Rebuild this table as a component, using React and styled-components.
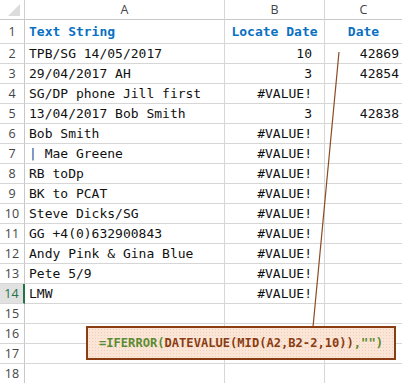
import styled, { createGlobalStyle } from "styled-components"

const GlobalStyle = createGlobalStyle`
    html, body {
        margin: 0;
        padding: 0;
        background: #ffffff;
        overflow: hidden;
    }
    * {
        box-sizing: border-box;
    }
`

const rows = [
    ["TPB/SG 14/05/2017", "10", "42869"],
    ["29/04/2017 AH", "3", "42854"],
    ["SG/DP phone Jill first", "#VALUE!", ""],
    ["13/04/2017 Bob Smith", "3", "42838"],
    ["Bob Smith", "#VALUE!", ""],
    ["| Mae Greene", "#VALUE!", ""],
    ["RB toDp", "#VALUE!", ""],
    ["BK to PCAT", "#VALUE!", ""],
    ["Steve Dicks/SG", "#VALUE!", ""],
    ["GG +4(0)632900843", "#VALUE!", ""],
    ["Andy Pink & Gina Blue", "#VALUE!", ""],
    ["Pete 5/9", "#VALUE!", ""],
    ["LMW", "#VALUE!", ""],
    ["", "", ""],
    ["", "", ""],
    ["", "", ""],
    ["", "", ""],
]

export default function App() {
    return (
        <>
            <GlobalStyle />
            <Sheet>
                <Grid>
                    <Corner>
                        <svg width="24" height="19" viewBox="0 0 24 19">
                            <polygon points="20,4 20,16 8,16" fill="#dcdcdc" />
                        </svg>
                    </Corner>
                    <ColHead>A</ColHead>
                    <ColHead>B</ColHead>
                    <ColHead>C</ColHead>

                    <RowHead $tall>1</RowHead>
                    <Cell $title>Text String</Cell>
                    <Cell $title $center>Locate Date</Cell>
                    <Cell $title $center>Date</Cell>

                    {rows.map((r, i) => {
                        const n = i + 2
                        return [
                            <RowHead key={n + "h"} $active={n === 14}>{n}</RowHead>,
                            <Cell key={n + "a"}>
                                {r[0].startsWith("|") ? (
                                    <>
                                        <Bar>|</Bar>
                                        {r[0].slice(1)}
                                    </>
                                ) : (
                                    r[0]
                                )}
                            </Cell>,
                            <Cell key={n + "b"} $right $pad={12}>{r[1]}</Cell>,
                            <Cell key={n + "c"} $right $pad={3}>{r[2]}</Cell>,
                        ]
                    })}
                </Grid>

                <Pointer width="402" height="383" viewBox="0 0 402 383">
                    <line x1="339" y1="52" x2="313" y2="327" stroke="#8a4a22" strokeWidth="1.2" />
                </Pointer>

                <Callout>
                    <Green>=IFERROR(</Green>
                    <Brown>DATEVALUE(MID(A2,B2-2,10))</Brown>
                    <Green>,"")</Green>
                </Callout>
            </Sheet>
        </>
    )
}

const Sheet = styled.div`
    position: relative;
    width: 402px;
    height: 383px;
    overflow: hidden;
    background: #ffffff;
`

const Grid = styled.div`
    display: grid;
    grid-template-columns: 25px 200px 100px 78px;
    grid-template-rows: 20px 24px repeat(17, 20px);
`

const Corner = styled.div`
    border-right: 1px solid #d0d0d0;
    border-bottom: 1px solid #c8c8c8;
    display: flex;
`

const ColHead = styled.div`
    display: flex;
    align-items: center;
    justify-content: center;
    border-right: 1px solid #d6d6d6;
    border-bottom: 1px solid #c8c8c8;
    font-family: "Open Sans", "Noto Sans", sans-serif;
    font-size: 12.5px;
    color: #444444;
`

const RowHead = styled.div`
    display: flex;
    align-items: center;
    justify-content: center;
    border-right: ${(p) => (p.$active ? "2px solid #217346" : "1px solid #c8c8c8")};
    border-bottom: 1px solid #d6d6d6;
    background: ${(p) => (p.$active ? "#e1e1e1" : "#ffffff")};
    font-family: "Open Sans", "Noto Sans", sans-serif;
    font-size: 12.5px;
    color: ${(p) => (p.$active ? "#217346" : "#444444")};
`

const Cell = styled.div`
    display: flex;
    align-items: center;
    justify-content: ${(p) => (p.$center ? "center" : p.$right ? "flex-end" : "flex-start")};
    padding: ${(p) => (p.$right ? `0 ${p.$pad}px 0 0` : p.$center ? "0" : "0 0 0 4px")};
    border-right: 1px solid #d6d6d6;
    border-bottom: 1px solid #d6d6d6;
    font-family: "DejaVu Sans Mono", "Liberation Mono", monospace;
    font-size: 13px;
    font-weight: ${(p) => (p.$title ? "bold" : "normal")};
    color: ${(p) => (p.$title ? "#0a70c2" : "#111111")};
    white-space: pre;
    overflow: visible;
`

const Bar = styled.span`
    color: #1f4e8c;
`

const Pointer = styled.svg`
    position: absolute;
    left: 0;
    top: 0;
    pointer-events: none;
`

const Callout = styled.div`
    position: absolute;
    left: 86px;
    top: 326px;
    width: 310px;
    height: 34px;
    display: flex;
    align-items: center;
    padding-left: 11px;
    border: 2px solid #8a3d12;
    background-color: #fbe5d6;
    background-image: radial-gradient(#f1cdb6 0.6px, transparent 0.8px);
    background-size: 3px 3px;
    font-family: "DejaVu Sans Mono", "Liberation Mono", monospace;
    font-size: 12.1px;
    font-weight: bold;
    white-space: pre;
`

const Green = styled.span`
    color: #5a8a32;
`

const Brown = styled.span`
    color: #8a3d12;
`
